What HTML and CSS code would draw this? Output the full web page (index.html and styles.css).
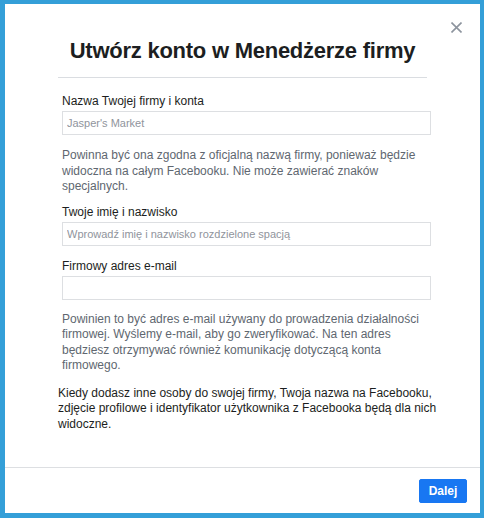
FILE: index.html
```html
<!DOCTYPE html>
<html lang="pl">
<head>
  <meta charset="UTF-8">
  <title>Utwórz konto w Menedżerze firmy</title>
  <link rel="stylesheet" href="styles.css">
</head>
<body>
  <div class="dialog">
    <button class="close" aria-label="Zamknij">
      <svg width="11" height="11" viewBox="0 0 11 11">
        <path d="M0.5 0.5 L10.5 10.5 M10.5 0.5 L0.5 10.5" stroke="#8d949e" stroke-width="1.6" fill="none"/>
      </svg>
    </button>

    <div class="content">
      <h1 class="title">Utwórz konto w Menedżerze firmy</h1>
      <div class="divider"></div>

      <div class="form">
        <label for="firma">Nazwa Twojej firmy i konta</label>
        <input type="text" id="firma" placeholder="Jasper's Market">
        <p class="help">Powinna być ona zgodna z oficjalną nazwą firmy, ponieważ będzie widoczna na całym Facebooku. Nie może zawierać znaków specjalnych.</p>

        <label for="imie" class="second">Twoje imię i nazwisko</label>
        <input type="text" id="imie" placeholder="Wprowadź imię i nazwisko rozdzielone spacją">

        <label for="email" class="third">Firmowy adres e-mail</label>
        <input type="text" id="email">
        <p class="help help-email">Powinien to być adres e-mail używany do prowadzenia działalności firmowej. Wyślemy e-mail, aby go zweryfikować. Na ten adres będziesz otrzymywać również komunikację dotyczącą konta firmowego.</p>
      </div>

      <p class="note">Kiedy dodasz inne osoby do swojej firmy, Twoja nazwa na Facebooku, zdjęcie profilowe i identyfikator użytkownika z Facebooka będą dla nich widoczne.</p>
    </div>

    <div class="footer">
      <button class="btn-next">Dalej</button>
    </div>
  </div>
</body>
</html>
```

FILE: styles.css
```css
* {
  box-sizing: border-box;
}
body {
  margin: 0;
  font-family: "Liberation Sans", Arial, sans-serif;
  background: #ffffff;
}
.dialog {
  position: relative;
  width: 484px;
  height: 518px;
  background: #ffffff;
  border-style: solid;
  border-color: #349fd8;
  border-width: 4px 4px 5px 5px;
  display: flex;
  flex-direction: column;
}
.close {
  position: absolute;
  top: 18px;
  right: 18px;
  width: 11px;
  height: 11px;
  padding: 0;
  border: 0;
  background: none;
  cursor: pointer;
  line-height: 0;
}
.content {
  flex: 1;
  padding-top: 33px;
}
.title {
  margin: 0;
  font-size: 22px;
  line-height: 28px;
  font-weight: bold;
  letter-spacing: -0.25px;
  color: #1c1e21;
  text-align: center;
}
.divider {
  height: 1px;
  margin: 12px 53px 0 53px;
  background: #dadde1;
}
.form {
  width: 369px;
  margin-left: 57px;
  display: flex;
  flex-direction: column;
}
label {
  display: block;
  margin-top: 15px;
  margin-bottom: 2px;
  font-size: 12px;
  line-height: 16px;
  color: #1c1e21;
}
label.second {
  margin-top: 9px;
}
label.third {
  margin-top: 12px;
}
input[type="text"] {
  width: 100%;
  height: 24px;
  padding: 0 4px;
  border: 1px solid #dddfe2;
  border-radius: 0;
  font-family: inherit;
  font-size: 11px;
  color: #1c1e21;
  outline: none;
}
input::placeholder {
  color: #90949c;
}
.help {
  margin: 13px 0 0 0;
  font-size: 12px;
  line-height: 15.5px;
  color: #606770;
}
.help-email {
  margin-top: 12px;
}
.note {
  width: 395px;
  margin: 12px 0 0 53px;
  font-size: 12px;
  line-height: 15.5px;
  color: #1c1e21;
}
.footer {
  border-top: 1px solid #dddfe2;
  padding: 11px 13px 10px 0;
  display: flex;
  justify-content: flex-end;
}
.btn-next {
  width: 48px;
  height: 24px;
  padding: 0;
  border: 1px solid #1877f2;
  border-radius: 2px;
  background: #1877f2;
  color: #ffffff;
  font-family: inherit;
  font-size: 12px;
  font-weight: bold;
  cursor: pointer;
}
```
